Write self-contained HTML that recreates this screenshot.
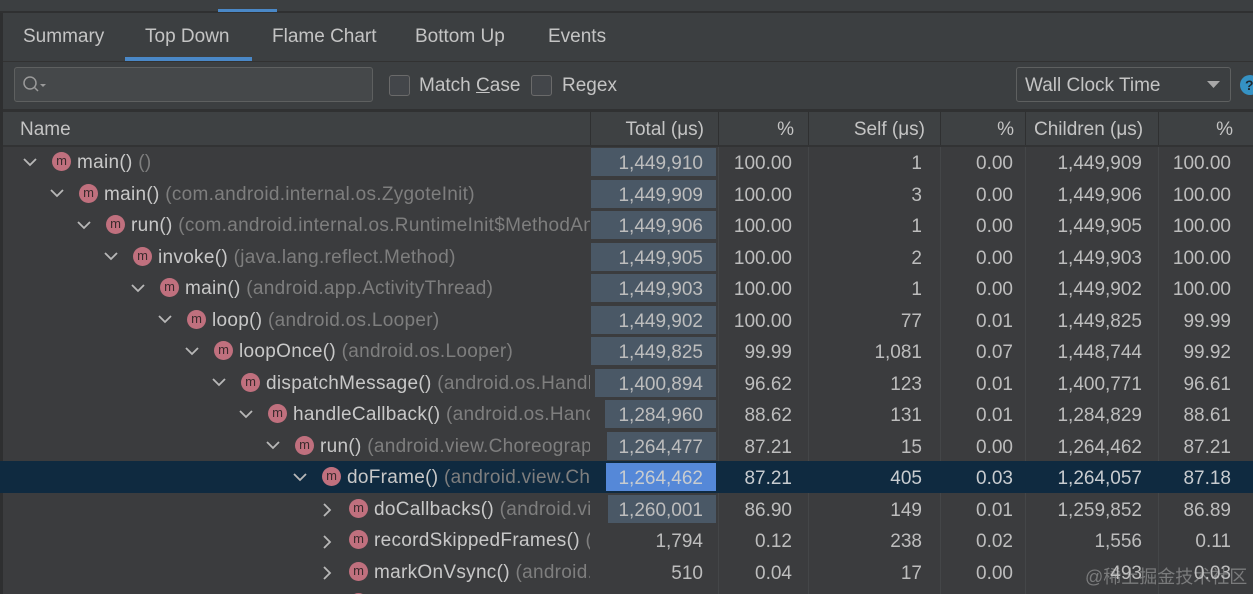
<!DOCTYPE html>
<html><head><meta charset="utf-8"><style>
*{margin:0;padding:0;box-sizing:border-box}
body{width:1253px;height:594px;overflow:hidden;background:#3c3f41;font-family:"Liberation Sans",sans-serif;color:#bdbdbd;font-size:19px;position:relative}
.a{position:absolute}
.tab{position:absolute;top:26px;font-size:19px;color:#c4c4c4}
.row{position:absolute;left:0;width:1253px;height:31.5px}
.c{position:absolute;top:2px;height:31.5px;line-height:31.5px;text-align:right;white-space:nowrap}
.nm{position:absolute;top:1px;height:31.5px;line-height:31.5px;white-space:nowrap;color:#c8c8c8;letter-spacing:0.3px}
.nm i{font-style:normal;color:#7e7e7e}
.ic{position:absolute;top:6px;width:19px;height:19px;border-radius:50%;background:#c0707e;color:#3a2a2c;font-size:13px;line-height:18px;text-align:center;letter-spacing:0}
.bar{position:absolute;top:2px;height:28px;background:#4a5866}
.hd{position:absolute;top:113px;height:33px;line-height:33px;color:#c4c4c4;text-align:right}
</style></head><body>
<div class="a" style="left:0;top:0;width:3px;height:594px;background:#2e2f30"></div>
<div class="a" style="left:0;top:0;width:1253px;height:13px;background:#3c3f41;border-bottom:2px solid #2f3031"></div>
<div class="a" style="left:218px;top:9px;width:59px;height:3px;background:#4a88c7"></div>
<div class="tab" style="left:23px">Summary</div>
<div class="tab" style="left:145px">Top Down</div>
<div class="tab" style="left:272px">Flame Chart</div>
<div class="tab" style="left:415px">Bottom Up</div>
<div class="tab" style="left:548px">Events</div>
<div class="a" style="left:125px;top:57px;width:127px;height:4px;background:#4a88c7"></div>
<div class="a" style="left:3px;top:61px;width:1250px;height:1px;background:#323232"></div>
<div class="a" style="left:14px;top:67px;width:359px;height:35px;border:1px solid #5e6060;border-radius:3px;background:#45484a"></div>
<svg class="a" style="left:22px;top:75px" width="26" height="20"><circle cx="8" cy="8" r="6" fill="none" stroke="#9a9a9a" stroke-width="1.5"/><line x1="12" y1="12" x2="16" y2="16" stroke="#9a9a9a" stroke-width="1.5"/><path d="M18 9h6l-3 3z" fill="#9a9a9a"/></svg>
<div class="a" style="left:389px;top:75px;width:21px;height:21px;border:1px solid #6a6a6a;border-radius:3px;background:#43464a"></div>
<div class="a" style="left:419px;top:75px;color:#c4c4c4">Match <u>C</u>ase</div>
<div class="a" style="left:531px;top:75px;width:21px;height:21px;border:1px solid #6a6a6a;border-radius:3px;background:#43464a"></div>
<div class="a" style="left:562px;top:75px;color:#c4c4c4">Re<u>g</u>ex</div>
<div class="a" style="left:1016px;top:67px;width:215px;height:35px;border:1px solid #5e6060;border-radius:3px;background:#3c3f41"></div>
<div class="a" style="left:1025px;top:75px;color:#c4c4c4">Wall Clock Time</div>
<svg class="a" style="left:1207px;top:80px" width="14" height="10"><path d="M0 1h13l-6.5 7z" fill="#a8a8a8"/></svg>
<div class="a" style="left:1240px;top:75px;width:20px;height:20px;border-radius:50%;background:#3592c4;color:#1d2a33;font-size:14px;line-height:20px;padding-left:5px;font-weight:bold">?</div>
<div class="a" style="left:3px;top:109px;width:1250px;height:3px;background:#303132"></div>
<div class="a" style="left:3px;top:112px;width:1250px;height:33px;background:#3e4143"></div>
<div class="hd" style="left:20px;text-align:left">Name</div>
<div class="hd" style="left:590px;width:114px">Total (μs)</div>
<div class="hd" style="left:718px;width:76px">%</div>
<div class="hd" style="left:808px;width:117px">Self (μs)</div>
<div class="hd" style="left:940px;width:74px">%</div>
<div class="hd" style="left:1034px;text-align:left">Children (μs)</div>
<div class="hd" style="left:1158px;width:75px">%</div>
<div class="a" style="left:590px;top:112px;width:1px;height:33px;background:#2f3031"></div>
<div class="a" style="left:718px;top:112px;width:1px;height:33px;background:#2f3031"></div>
<div class="a" style="left:808px;top:112px;width:1px;height:33px;background:#2f3031"></div>
<div class="a" style="left:940px;top:112px;width:1px;height:33px;background:#2f3031"></div>
<div class="a" style="left:1025px;top:112px;width:1px;height:33px;background:#2f3031"></div>
<div class="a" style="left:1158px;top:112px;width:1px;height:33px;background:#2f3031"></div>
<div class="a" style="left:3px;top:145px;width:1250px;height:2px;background:#323334"></div>
<div class="a" style="left:3px;top:147px;width:1250px;height:447px;background:#3b3c3e"></div>
<div class="a" style="left:718px;top:147px;width:1px;height:447px;background:#444648"></div>
<div class="a" style="left:808px;top:147px;width:1px;height:447px;background:#444648"></div>
<div class="a" style="left:940px;top:147px;width:1px;height:447px;background:#444648"></div>
<div class="a" style="left:1025px;top:147px;width:1px;height:447px;background:#444648"></div>
<div class="a" style="left:1158px;top:147px;width:1px;height:447px;background:#444648"></div>

<div class="row" style="top:461px;background:#0f2a40"></div>

<div class="bar" style="left:591px;top:148px;width:125px"></div>
<div class="bar" style="left:591px;top:180px;width:125px"></div>
<div class="bar" style="left:591px;top:211px;width:125px"></div>
<div class="bar" style="left:591px;top:243px;width:125px"></div>
<div class="bar" style="left:591px;top:274px;width:125px"></div>
<div class="bar" style="left:591px;top:306px;width:125px"></div>
<div class="bar" style="left:591px;top:337px;width:125px"></div>
<div class="bar" style="left:595px;top:369px;width:121px"></div>
<div class="bar" style="left:605px;top:400px;width:111px"></div>
<div class="bar" style="left:607px;top:432px;width:109px"></div>
<div class="bar" style="left:606px;top:463px;width:110px;background:#5588d8"></div>
<div class="bar" style="left:608px;top:495px;width:108px"></div>

<svg class="a" style="left:0;top:0" width="420" height="594" fill="none" stroke="#b8b8b8" stroke-width="1.8">
<path d="M24 159l6 6 6-6"/><path d="M51 190l6 6 6-6"/><path d="M78 222l6 6 6-6"/><path d="M105 253l6 6 6-6"/><path d="M132 285l6 6 6-6"/><path d="M159 316l6 6 6-6"/><path d="M186 348l6 6 6-6"/><path d="M213 379l6 6 6-6"/><path d="M240 411l6 6 6-6"/><path d="M267 442l6 6 6-6"/><path d="M294 474l6 6 6-6"/>
<path d="M324 504l6 6-6 6"/><path d="M324 536l6 6-6 6"/><path d="M324 567l6 6-6 6"/>
</svg>

<div class="a" style="left:0;top:146px;width:590px;height:448px;overflow:hidden">
<div class="row" style="top:0"><div class="ic" style="left:52px">m</div><div class="nm" style="left:77px">main() <i>()</i></div></div>
<div class="row" style="top:31.5px"><div class="ic" style="left:79px">m</div><div class="nm" style="left:104px">main() <i>(com.android.internal.os.ZygoteInit)</i></div></div>
<div class="row" style="top:63px"><div class="ic" style="left:106px">m</div><div class="nm" style="left:131px">run() <i>(com.android.internal.os.RuntimeInit$MethodAndArgsCaller)</i></div></div>
<div class="row" style="top:94.5px"><div class="ic" style="left:133px">m</div><div class="nm" style="left:158px">invoke() <i>(java.lang.reflect.Method)</i></div></div>
<div class="row" style="top:126px"><div class="ic" style="left:160px">m</div><div class="nm" style="left:185px">main() <i>(android.app.ActivityThread)</i></div></div>
<div class="row" style="top:157.5px"><div class="ic" style="left:187px">m</div><div class="nm" style="left:212px">loop() <i>(android.os.Looper)</i></div></div>
<div class="row" style="top:189px"><div class="ic" style="left:214px">m</div><div class="nm" style="left:239px">loopOnce() <i>(android.os.Looper)</i></div></div>
<div class="row" style="top:220.5px"><div class="ic" style="left:241px">m</div><div class="nm" style="left:266px">dispatchMessage() <i>(android.os.Handler)</i></div></div>
<div class="row" style="top:252px"><div class="ic" style="left:268px">m</div><div class="nm" style="left:293px">handleCallback() <i>(android.os.Handler)</i></div></div>
<div class="row" style="top:283.5px"><div class="ic" style="left:295px">m</div><div class="nm" style="left:320px">run() <i>(android.view.Choreographer)</i></div></div>
<div class="row" style="top:315px"><div class="ic" style="left:322px">m</div><div class="nm" style="left:347px">doFrame() <i>(android.view.Choreographer)</i></div></div>
<div class="row" style="top:346.5px"><div class="ic" style="left:349px">m</div><div class="nm" style="left:374px">doCallbacks() <i>(android.view.Choreographer)</i></div></div>
<div class="row" style="top:378px"><div class="ic" style="left:349px">m</div><div class="nm" style="left:374px">recordSkippedFrames() <i>(android.view)</i></div></div>
<div class="row" style="top:409.5px"><div class="ic" style="left:349px">m</div><div class="nm" style="left:374px">markOnVsync() <i>(android.view)</i></div></div>
<div class="row" style="top:441px"><div class="ic" style="left:349px">m</div></div>
</div>

<div class="a" style="left:0;top:146px;width:1253px;height:448px">
<div class="row" style="top:0"><div class="c" style="left:590px;width:113px">1,449,910</div><div class="c" style="left:718px;width:74px">100.00</div><div class="c" style="left:808px;width:114px">1</div><div class="c" style="left:940px;width:73px">0.00</div><div class="c" style="left:1025px;width:117px">1,449,909</div><div class="c" style="left:1158px;width:73px">100.00</div></div>
<div class="row" style="top:31.5px"><div class="c" style="left:590px;width:113px">1,449,909</div><div class="c" style="left:718px;width:74px">100.00</div><div class="c" style="left:808px;width:114px">3</div><div class="c" style="left:940px;width:73px">0.00</div><div class="c" style="left:1025px;width:117px">1,449,906</div><div class="c" style="left:1158px;width:73px">100.00</div></div>
<div class="row" style="top:63px"><div class="c" style="left:590px;width:113px">1,449,906</div><div class="c" style="left:718px;width:74px">100.00</div><div class="c" style="left:808px;width:114px">1</div><div class="c" style="left:940px;width:73px">0.00</div><div class="c" style="left:1025px;width:117px">1,449,905</div><div class="c" style="left:1158px;width:73px">100.00</div></div>
<div class="row" style="top:94.5px"><div class="c" style="left:590px;width:113px">1,449,905</div><div class="c" style="left:718px;width:74px">100.00</div><div class="c" style="left:808px;width:114px">2</div><div class="c" style="left:940px;width:73px">0.00</div><div class="c" style="left:1025px;width:117px">1,449,903</div><div class="c" style="left:1158px;width:73px">100.00</div></div>
<div class="row" style="top:126px"><div class="c" style="left:590px;width:113px">1,449,903</div><div class="c" style="left:718px;width:74px">100.00</div><div class="c" style="left:808px;width:114px">1</div><div class="c" style="left:940px;width:73px">0.00</div><div class="c" style="left:1025px;width:117px">1,449,902</div><div class="c" style="left:1158px;width:73px">100.00</div></div>
<div class="row" style="top:157.5px"><div class="c" style="left:590px;width:113px">1,449,902</div><div class="c" style="left:718px;width:74px">100.00</div><div class="c" style="left:808px;width:114px">77</div><div class="c" style="left:940px;width:73px">0.01</div><div class="c" style="left:1025px;width:117px">1,449,825</div><div class="c" style="left:1158px;width:73px">99.99</div></div>
<div class="row" style="top:189px"><div class="c" style="left:590px;width:113px">1,449,825</div><div class="c" style="left:718px;width:74px">99.99</div><div class="c" style="left:808px;width:114px">1,081</div><div class="c" style="left:940px;width:73px">0.07</div><div class="c" style="left:1025px;width:117px">1,448,744</div><div class="c" style="left:1158px;width:73px">99.92</div></div>
<div class="row" style="top:220.5px"><div class="c" style="left:590px;width:113px">1,400,894</div><div class="c" style="left:718px;width:74px">96.62</div><div class="c" style="left:808px;width:114px">123</div><div class="c" style="left:940px;width:73px">0.01</div><div class="c" style="left:1025px;width:117px">1,400,771</div><div class="c" style="left:1158px;width:73px">96.61</div></div>
<div class="row" style="top:252px"><div class="c" style="left:590px;width:113px">1,284,960</div><div class="c" style="left:718px;width:74px">88.62</div><div class="c" style="left:808px;width:114px">131</div><div class="c" style="left:940px;width:73px">0.01</div><div class="c" style="left:1025px;width:117px">1,284,829</div><div class="c" style="left:1158px;width:73px">88.61</div></div>
<div class="row" style="top:283.5px"><div class="c" style="left:590px;width:113px">1,264,477</div><div class="c" style="left:718px;width:74px">87.21</div><div class="c" style="left:808px;width:114px">15</div><div class="c" style="left:940px;width:73px">0.00</div><div class="c" style="left:1025px;width:117px">1,264,462</div><div class="c" style="left:1158px;width:73px">87.21</div></div>
<div class="row" style="top:315px;color:#c8ccd0"><div class="c" style="left:590px;width:113px">1,264,462</div><div class="c" style="left:718px;width:74px">87.21</div><div class="c" style="left:808px;width:114px">405</div><div class="c" style="left:940px;width:73px">0.03</div><div class="c" style="left:1025px;width:117px">1,264,057</div><div class="c" style="left:1158px;width:73px">87.18</div></div>
<div class="row" style="top:346.5px"><div class="c" style="left:590px;width:113px">1,260,001</div><div class="c" style="left:718px;width:74px">86.90</div><div class="c" style="left:808px;width:114px">149</div><div class="c" style="left:940px;width:73px">0.01</div><div class="c" style="left:1025px;width:117px">1,259,852</div><div class="c" style="left:1158px;width:73px">86.89</div></div>
<div class="row" style="top:378px"><div class="c" style="left:590px;width:113px">1,794</div><div class="c" style="left:718px;width:74px">0.12</div><div class="c" style="left:808px;width:114px">238</div><div class="c" style="left:940px;width:73px">0.02</div><div class="c" style="left:1025px;width:117px">1,556</div><div class="c" style="left:1158px;width:73px">0.11</div></div>
<div class="row" style="top:409.5px"><div class="c" style="left:590px;width:113px">510</div><div class="c" style="left:718px;width:74px">0.04</div><div class="c" style="left:808px;width:114px">17</div><div class="c" style="left:940px;width:73px">0.00</div><div class="c" style="left:1025px;width:117px">493</div><div class="c" style="left:1158px;width:73px">0.03</div></div>
</div>
<div class="a" style="left:1085px;top:563px;font-size:18px;color:rgba(200,200,200,0.45);font-family:'Liberation Sans','Noto Sans CJK SC',sans-serif">@稀土掘金技术社区</div>
</body></html>
